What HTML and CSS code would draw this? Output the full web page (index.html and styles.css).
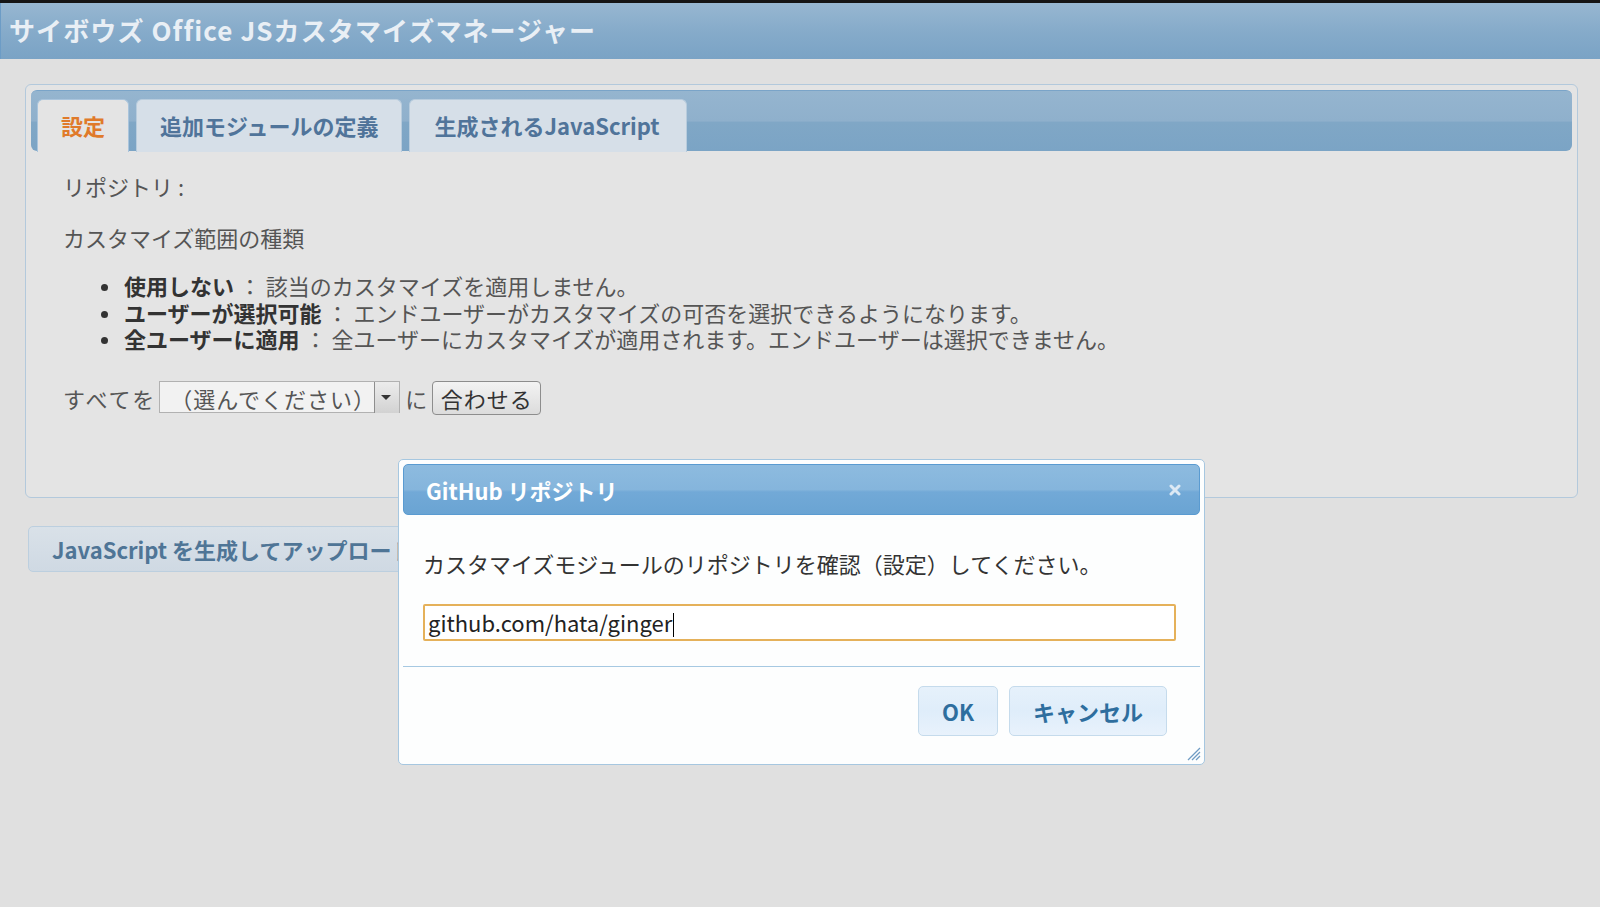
FILE: index.html
```html
<!DOCTYPE html>
<html lang="ja">
<head>
<meta charset="UTF-8" />
<meta name="viewport" content="width=device-width, initial-scale=1.0" />
<title>サイボウズ Office JSカスタマイズマネージャー</title>
<link rel="stylesheet" href="styles.css">
</head>
<body>
<h1 class="app-title">サイボウズ Office JSカスタマイズマネージャー</h1>

<div class="tabs">
    <ul class="tab-nav">
        <li class="tab active">設定</li>
        <li class="tab">追加モジュールの定義</li>
        <li class="tab">生成されるJavaScript</li>
    </ul>

    <div class="tab-panel">
        <p>リポジトリ :</p>
        <p>カスタマイズ範囲の種類</p>
        <ul class="kinds">
            <li><b>使用しない</b> ： 該当のカスタマイズを適用しません。</li>
            <li><b>ユーザーが選択可能</b> ： エンドユーザーがカスタマイズの可否を選択できるようになります。</li>
            <li><b>全ユーザーに適用</b> ： 全ユーザーにカスタマイズが適用されます。エンドユーザーは選択できません。</li>
        </ul>
        <div class="apply-row">
            <span class="lead">すべてを</span>
            <span class="select-wrap">
                <select class="select">
                    <option>（選んでください）</option>
                </select>
            </span>
            <span>に</span>
            <button class="plain-btn">合わせる</button>
        </div>
    </div>
</div>

<button class="upload-btn">JavaScript を生成してアップロード</button>

<!-- modal: repository -->
<div class="dialog">
    <div class="dialog-title">
        <span>GitHub リポジトリ</span>
        <svg class="close" width="12" height="12" viewBox="0 0 12 12">
            <path d="M2 2L10 10M10 2L2 10" stroke="#dde9f4" stroke-width="3" stroke-linecap="round"/>
        </svg>
    </div>
    <div class="dialog-body">
        <p>カスタマイズモジュールのリポジトリを確認（設定）してください。</p>
        <div class="repo-input">github.com/hata/ginger<span class="caret"></span></div>
    </div>
    <div class="dialog-buttons">
        <button class="ui-btn">OK</button>
        <button class="ui-btn">キャンセル</button>
    </div>
    <svg class="resize" width="14" height="14" viewBox="0 0 14 14">
        <path d="M13 1L1 13M13 5L5 13M13 9L9 13" stroke="#6f9cc4" stroke-width="1.3" fill="none"/>
    </svg>
</div>
</body>
</html>
```

FILE: styles.css
```css
:root{
    --font:"Noto Sans CJK JP","Noto Sans",sans-serif;
    --page:#e0e0e0;
    --panel:#e4e4e4;
}
body{
    margin:0;
    border-top:3px solid #151515;
    background:var(--page);
    font-family:var(--font);
    font-size:22px;
    color:#555;
    min-height:904px;
}
p{margin:0}

/* ── Header ── */
.app-title{
    margin:0;
    height:56px;
    line-height:54px;
    padding-left:8px;
    font-size:26px;
    font-weight:700;
    color:#e9eff5;
    letter-spacing:1.1px;
    background:linear-gradient(#97b7d1,#86abca 50%,#7aa3c5);
    border-left:1px solid #6c9cc6;
    box-sizing:border-box;
}

/* ── Tabs ── */
.tabs{
    margin:25px 22px 0 25px;
    height:414px;
    box-sizing:border-box;
    padding:5px;
    background:var(--panel);
    border:1px solid #b3c9dc;
    border-radius:6px;
}
.tab-nav{
    list-style:none;
    margin:0;
    padding:8px 0 0 6px;
    height:61px;
    box-sizing:border-box;
    display:flex;
    gap:7px;
    border-radius:6px;
    border-top:1px solid #7aa4c8;
    background:linear-gradient(#95b5cf,#8fb0cc 50%,#80a7c6 52%,#7ba4c5);
}
.tab{
    height:53px;
    line-height:50px;
    padding:0 23px;
    font-weight:700;
    color:#50749a;
    background:#d6dfe8;
    border:1px solid #b8ccdd;
    border-bottom:0;
    border-radius:6px 6px 0 0;
    box-sizing:border-box;
}
.tab:last-child{padding:0 26px 0 24px}
.tab.active{color:#e07a2a;background:var(--panel);border-color:#a9c4dc}

.tab-panel{padding:22px 32px 0}
.tab-panel p{line-height:26px;margin-bottom:25px}
.kinds{margin:-3px 0 0;padding-left:59px;line-height:26.5px}
.kinds li{padding-left:2px}
.kinds b{color:#333}
.kinds li::marker{color:#333;font-size:18px}

.apply-row{display:flex;align-items:center;margin-top:29px;height:34px}
.lead{letter-spacing:2px}
.select-wrap{position:relative;margin:0 5px 0 3px}
.select{
    appearance:none;
    width:241px;
    height:32px;
    padding:0 0 0 10px;
    font:22px var(--font);
    letter-spacing:1px;
    color:#555;
    background:#f2f2f2;
    border:1px solid #b1b1b1;
    border-radius:0;
}
.select-wrap::after{
    content:"";
    position:absolute;
    right:1px;top:1px;bottom:1px;
    width:24px;
    border-left:1px solid #8e8e8e;
    background:linear-gradient(#ececec,#d2d2d2);
}
.select-wrap::before{
    content:"";
    position:absolute;
    z-index:1;
    right:9px;top:14px;
    border:5px solid transparent;
    border-top:5px solid #333;
    border-bottom:0;
}
.plain-btn{
    margin-left:5px;
    height:34px;
    width:109px;
    padding:0;
    font:22px var(--font);
    letter-spacing:1px;
    color:#333;
    background:linear-gradient(#f3f3f3,#dcdcdc);
    border:1px solid #8d8d8d;
    border-radius:4px;
}

.upload-btn{
    margin:28px 0 0 28px;
    height:46px;
    padding:0 23px;
    font:700 22px var(--font);
    color:#4f7596;
    background:linear-gradient(#d9e1e8,#d4dde6 50%,#cfd9e3);
    border:1px solid #bccfdf;
    border-radius:5px;
}

/* ── Dialog ── */
.dialog{
    position:absolute;
    top:459px;
    left:398px;
    width:807px;
    height:306px;
    box-sizing:border-box;
    padding:4px;
    background:#fdfefe;
    border:1px solid #a6c7e0;
    border-radius:5px;
    color:#333;
}
.dialog-title{
    height:51px;
    box-sizing:border-box;
    padding:0 18px 0 22px;
    display:flex;
    justify-content:space-between;
    align-items:center;
    font-weight:700;
    color:#fff;
    border:1px solid #5a9bd1;
    border-radius:5px;
    background:linear-gradient(#8dbbdf,#85b5dc 50%,#72a9d7 55%,#6aa4d3);
}
.dialog-body{padding:35px 20px 0}
.dialog-body p{line-height:26px}
.repo-input{
    margin-top:28px;
    width:753px;
    height:37px;
    line-height:33px;
    box-sizing:border-box;
    padding:0 3px;
    font-size:22px;
    color:#222;
    background:#fff;
    border:2px solid #e5b15a;
    border-radius:2px;
}
.caret{
    display:inline-block;
    width:1px;
    height:24px;
    margin-left:1px;
    vertical-align:-5px;
    background:#000;
}
.dialog-buttons{
    margin-top:25px;
    border-top:1px solid #a6c9e2;
    padding:19px 33px 0 0;
    display:flex;
    justify-content:flex-end;
    gap:11px;
}
.ui-btn{
    height:50px;
    padding:0 23px;
    min-width:80px;
    font:700 22px var(--font);
    color:#2e6e9e;
    background:linear-gradient(#e6f1fb,#dfedfa 50%,#e8f2fc);
    border:1px solid #c5dbec;
    border-radius:5px;
}
.resize{position:absolute;right:3px;bottom:3px}
```
